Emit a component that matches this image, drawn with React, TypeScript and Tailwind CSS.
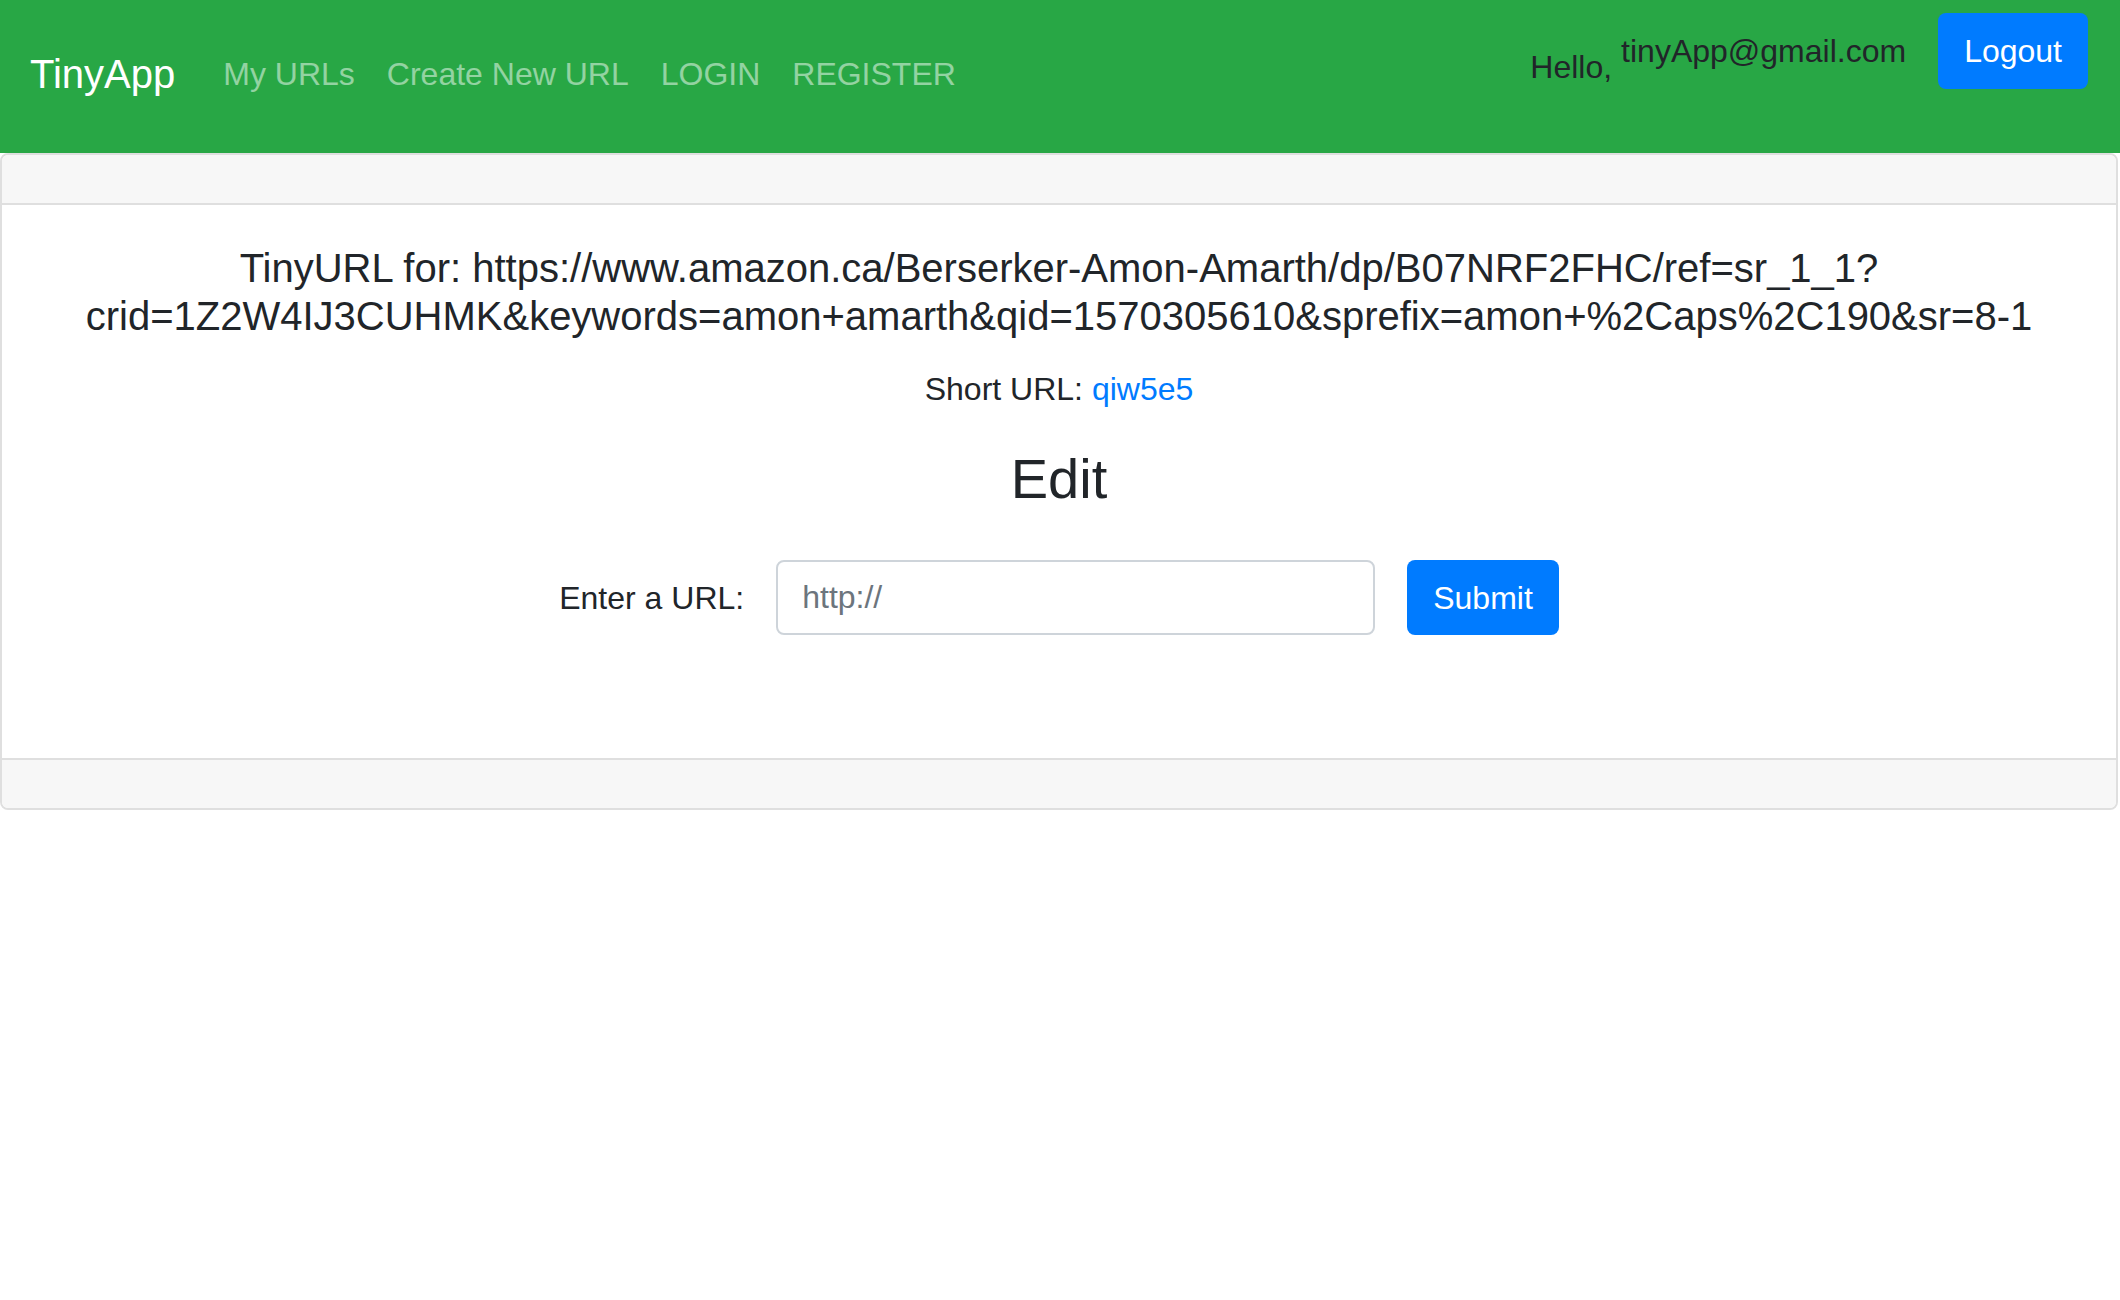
const NAV_LINKS = ['My URLs', 'Create New URL', 'LOGIN', 'REGISTER'];

export default function App() {
  return (
    <div className="min-h-screen bg-white font-['Liberation_Sans',Arial,sans-serif] text-[#212529]">
      <nav className="flex h-[153px] items-start justify-between bg-[#28a745] pl-[30px] pr-[32px]">
        <div className="mt-[44px] flex items-center">
          <a href="#" className="mr-[32px] text-[40px] leading-[60px] text-white">
            TinyApp
          </a>
          {NAV_LINKS.map((l) => (
            <a key={l} href="#" className="px-[16px] text-[32px] leading-[48px] text-white/50">
              {l}
            </a>
          ))}
        </div>

        <div className="flex items-start pt-[13px]">
          <span className="mt-[30px] text-[32px] leading-[48px]">Hello,</span>
          <span className="ml-[9px] mt-[14px] text-[32px] leading-[48px]">tinyApp@gmail.com</span>
          <button
            type="button"
            className="ml-[32px] h-[76px] rounded-[8px] bg-[#007bff] px-[26px] text-[32px] leading-[48px] text-white"
          >
            Logout
          </button>
        </div>
      </nav>

      <div className="mr-[2px] rounded-[8px] border-2 border-[#dfdfdf]">
        <div className="h-[50px] rounded-t-[6px] border-b-2 border-[#dfdfdf] bg-[#f7f7f7]" />

        <div className="px-[40px] pb-[40px] pt-[39px] text-center">
          <h5 className="mb-[25px] text-[40px] font-normal leading-[48px]">
            TinyURL for: https://www.amazon.ca/Berserker-Amon-Amarth/dp/B07NRF2FHC/ref=sr_1_1?
            <wbr />
            crid=1Z2W4IJ3CUHMK&amp;keywords=amon+amarth&amp;qid=1570305610&amp;sprefix=amon+%2Caps%2C190&amp;sr=8-1
          </h5>
          <p className="mb-[32px] text-[32px] leading-[48px]">
            Short URL:{' '}
            <a href="#" className="text-[#007bff]">
              qiw5e5
            </a>
          </p>
          <h3 className="mb-[48px] text-[56px] font-normal leading-[67px]">Edit</h3>

          <form
            className="mb-[83px] flex items-center justify-center gap-[32px]"
            onSubmit={(e) => e.preventDefault()}
          >
            <label className="text-[32px] leading-[48px]">Enter a URL:</label>
            <input
              type="text"
              placeholder="http://"
              className="h-[75px] w-[599px] rounded-[8px] border-2 border-[#ced4da] bg-white px-[24px] text-[32px] text-[#495057] outline-none placeholder:text-[#6c757d]"
            />
            <button
              type="submit"
              className="h-[75px] rounded-[8px] bg-[#007bff] px-[26px] text-[32px] leading-[48px] text-white"
            >
              Submit
            </button>
          </form>
        </div>

        <div className="h-[50px] rounded-b-[6px] border-t-2 border-[#dfdfdf] bg-[#f7f7f7]" />
      </div>
    </div>
  );
}
